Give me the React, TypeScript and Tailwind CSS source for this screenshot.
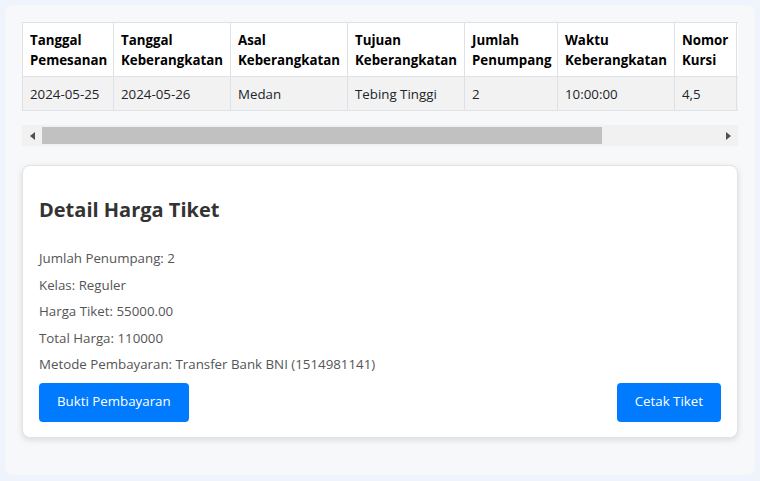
const columns = [
  { label: ['Tanggal', 'Pemesanan'], value: '2024-05-25', width: 'w-[91px]' },
  { label: ['Tanggal', 'Keberangkatan'], value: '2024-05-26', width: 'w-[117px]' },
  { label: ['Asal', 'Keberangkatan'], value: 'Medan', width: 'w-[117px]' },
  { label: ['Tujuan', 'Keberangkatan'], value: 'Tebing Tinggi', width: 'w-[117px]' },
  { label: ['Jumlah', 'Penumpang'], value: '2', width: 'w-[93px]' },
  { label: ['Waktu', 'Keberangkatan'], value: '10:00:00', width: 'w-[117px]' },
  { label: ['Nomor', 'Kursi'], value: '4,5', width: 'w-[62px]' },
];

const details = [
  'Jumlah Penumpang: 2',
  'Kelas: Reguler',
  'Harga Tiket: 55000.00',
  'Total Harga: 110000',
  'Metode Pembayaran: Transfer Bank BNI (1514981141)',
];

const App = () => {
  return (
    <div className="min-h-[481px] bg-[#eff3fb] p-[5px] font-['Open_Sans',sans-serif]">
      <div className="rounded-lg bg-[#f7f8fa] px-[17px] pt-[17px] pb-[37px]">
        <div className="overflow-hidden">
          <table className="w-[814px] table-fixed border-collapse text-[13.3px] text-[#212529]">
            <thead>
              <tr className="bg-white">
                {columns.map((col) => (
                  <th
                    key={col.label.join(' ')}
                    className={`${col.width} border border-[#dee2e6] px-[7px] pt-[7px] pb-[6px] text-left align-top font-bold leading-[20px] whitespace-nowrap text-black`}
                  >
                    {col.label[0]}
                    <br />
                    {col.label[1]}
                  </th>
                ))}
                {/* next column, scrolled out of view */}
                <th className="w-[100px] border border-[#dee2e6]" />
              </tr>
            </thead>
            <tbody>
              <tr className="bg-[#f2f2f2]">
                {columns.map((col) => (
                  <td
                    key={col.label.join(' ')}
                    className="border border-[#dee2e6] px-[7px] pt-[7px] pb-[6px] leading-[20px] whitespace-nowrap"
                  >
                    {col.value}
                  </td>
                ))}
                <td className="border border-[#dee2e6]" />
              </tr>
            </tbody>
          </table>
        </div>

        {/* horizontal scrollbar */}
        <div className="mt-[14px] flex h-[21px] items-center bg-[#f1f1f1]">
          <div className="flex w-[20px] justify-center">
            <div className="h-0 w-0 border-y-[4px] border-r-[5px] border-y-transparent border-r-[#505050]" />
          </div>
          <div className="h-[17px] w-[560px] bg-[#c1c1c1]" />
          <div className="flex-1" />
          <div className="flex w-[20px] justify-center">
            <div className="h-0 w-0 border-y-[4px] border-l-[5px] border-y-transparent border-l-[#505050]" />
          </div>
        </div>

        <div className="mt-[19px] rounded-lg border border-[#e3e3e3] bg-white px-4 pt-[32px] pb-[15px] shadow-[0_2px_6px_rgba(0,0,0,0.12)]">
          <h3 className="mb-[23px] text-[20px] leading-[24px] font-bold text-[#333]">
            Detail Harga Tiket
          </h3>
          <div className="flex flex-col text-[13.3px] leading-[26.5px] text-[#555]">
            {details.map((line) => (
              <p key={line}>{line}</p>
            ))}
          </div>
          <div className="mt-[5px] flex justify-between">
            <button
              type="button"
              className="h-[39px] rounded-[4px] bg-[#007bff] px-[18px] text-[13.3px] text-white"
            >
              Bukti Pembayaran
            </button>
            <button
              type="button"
              className="h-[39px] rounded-[4px] bg-[#007bff] px-[18px] text-[13.3px] text-white"
            >
              Cetak Tiket
            </button>
          </div>
        </div>
      </div>
    </div>
  );
};

export default App;
